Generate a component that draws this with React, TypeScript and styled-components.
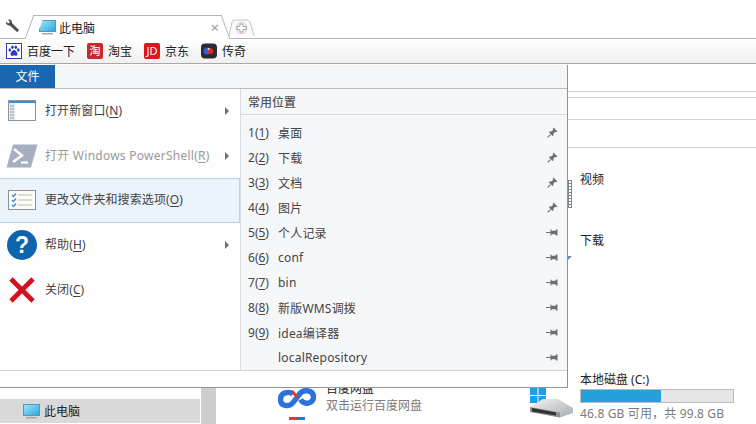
import React from "react";
import styled, { createGlobalStyle } from "styled-components";

const GlobalStyle = createGlobalStyle`
  html, body {
    margin: 0;
    padding: 0;
    background: #fff;
  }
  body {
    font-family: "Noto Sans", "Noto Sans CJK SC", sans-serif;
    font-size: 12px;
    color: #333;
  }
`;

const places = [
  { key: "1", name: "桌面", pinned: true },
  { key: "2", name: "下载", pinned: true },
  { key: "3", name: "文档", pinned: true },
  { key: "4", name: "图片", pinned: true },
  { key: "5", name: "个人记录", pinned: false },
  { key: "6", name: "conf", pinned: false },
  { key: "7", name: "bin", pinned: false },
  { key: "8", name: "新版WMS调拨", pinned: false },
  { key: "9", name: "idea编译器", pinned: false },
  { key: "", name: "localRepository", pinned: false },
];

const MonitorIcon = () => (
  <svg width="17" height="15" viewBox="0 0 17 15">
    <defs>
      <linearGradient id="screen" x1="0" y1="0" x2="1" y2="1">
        <stop offset="0" stopColor="#a4e4f7" />
        <stop offset="1" stopColor="#2aa5e0" />
      </linearGradient>
    </defs>
    <rect x="0.5" y="0.5" width="16" height="11" fill="url(#screen)" stroke="#4a9cc8" />
    <rect x="3" y="13" width="11" height="1.4" fill="#9aa5ad" />
  </svg>
);

const WrenchIcon = () => (
  <svg width="15" height="15" viewBox="0 0 15 15">
    <path
      d="M1 2.5 L3.2 4.6 L5 3 L3 .8 C5 -.2 7.4 1.2 6.9 4 L14 11 L12.3 13.2 L5 6.6 C2.6 7 .4 5 1 2.5 Z"
      fill="#4d4d4d"
    />
  </svg>
);

const NewTabIcon = () => (
  <svg width="27" height="18" viewBox="0 0 27 18">
    <path d="M1 17 L4 3 Q4.5 1 7 1 H19 Q21 1 22 3 L26 17" fill="#fafafa" stroke="#c4c4c4" />
    <circle cx="13.5" cy="9" r="5.5" fill="#f2f2f2" stroke="#cfcfcf" />
    <path
      d="M12 5 H15 V7.5 H18 V10.5 H15 V13 H12 V10.5 H9 V7.5 H12 Z"
      fill="#fff"
      stroke="#a8a8a8"
    />
  </svg>
);

const PawIcon = () => (
  <svg width="16" height="16" viewBox="0 0 16 16">
    <rect x="0.5" y="0.5" width="15" height="15" fill="#fff" stroke="#2f3bc4" />
    <g fill="#2f3bc4">
      <ellipse cx="3.8" cy="7" rx="1.3" ry="1.7" />
      <ellipse cx="6.4" cy="4.2" rx="1.3" ry="1.7" />
      <ellipse cx="9.8" cy="4.2" rx="1.3" ry="1.7" />
      <ellipse cx="12.3" cy="7" rx="1.3" ry="1.7" />
      <path d="M8 7 C10 7 11.5 10 11.5 11.4 C11.5 13 9.5 12.6 8 12.6 C6.5 12.6 4.5 13 4.5 11.4 C4.5 10 6 7 8 7 Z" />
    </g>
  </svg>
);

const LegendIcon = () => (
  <svg width="16" height="16" viewBox="0 0 16 16">
    <rect width="16" height="15" y="0.5" rx="4" fill="#2b2b33" />
    <circle cx="6" cy="8" r="3.6" fill="#2f5fd8" />
    <circle cx="9.4" cy="8" r="3" fill="#d42a2a" />
    <circle cx="7.6" cy="6" r="1" fill="#e8e8f4" />
  </svg>
);

const WindowIcon = () => (
  <svg width="29" height="22" viewBox="0 0 29 22">
    <rect x="0.5" y="0.5" width="27" height="20" fill="#fdfdfd" stroke="#8d949b" />
    <rect x="1" y="1" width="27" height="2" fill="#3f8fd0" />
    <rect x="1" y="3" width="6" height="17" fill="#e6e9ec" />
    <path d="M2 6h4M2 9h4M2 12h4M2 15h4M2 18h4" stroke="#9aa0a6" strokeWidth="1" />
  </svg>
);

const ShellIcon = () => (
  <svg width="32" height="24" viewBox="0 0 32 24">
    <path d="M7 0.5 H31.5 L25 23.5 H0.5 Z" fill="#a6afc2" />
    <path d="M8 5 L16 11.5 L7 18" fill="none" stroke="#fff" strokeWidth="2.4" />
    <path d="M15 18.5 H22" stroke="#fff" strokeWidth="2.2" />
  </svg>
);

const OptionsIcon = () => (
  <svg width="28" height="20" viewBox="0 0 28 20">
    <rect x="0.5" y="0.5" width="27" height="19" fill="#fbfcfd" stroke="#8b8f94" />
    <path d="M10 5h14M10 10h14M10 15h14" stroke="#c8b89e" strokeWidth="1" />
    <path d="M4 5l1.5 1.5L8 3.5M4 10l1.5 1.5L8 8.5M4 15l1.5 1.5L8 13.5" fill="none" stroke="#4f8dc8" strokeWidth="1.5" />
  </svg>
);

const CloseIcon = () => (
  <svg width="26" height="26" viewBox="0 0 26 26">
    <path d="M2 2 L24 24 M24 2 L2 24" stroke="#d3101c" strokeWidth="4.6" />
  </svg>
);

const PinIcon = ({ pinned }: { pinned: boolean }) =>
  pinned ? (
    <svg width="11" height="11" viewBox="0 0 11 11">
      <path d="M6.5 0.5 L10.5 4.5 L9.2 5.2 L8.2 4.8 L6.4 6.8 L6.4 8.6 L5.4 9 L2 5.6 L2.4 4.6 L4.2 4.6 L6.2 2.8 L5.8 1.8 Z" fill="#68707c" />
      <path d="M3.4 7.6 L0.6 10.4" stroke="#68707c" strokeWidth="1.1" />
    </svg>
  ) : (
    <svg width="12" height="9" viewBox="0 0 12 9">
      <path d="M0 4.5 H5" stroke="#68707c" strokeWidth="1" />
      <path d="M4.5 1 V8 L6 6.2 H9.5 L10 7.5 H11.5 V1.5 H10 L9.5 2.8 H6 Z" fill="#68707c" />
    </svg>
  );

const CloudIcon = () => (
  <svg width="38" height="26" viewBox="0 0 38 26">
    <path
      d="M15 10 C11 7 2.5 8 2.5 15.5 C2.5 22 11 24 15.5 18 L22 9.5 C25.5 5 35.5 6 35.5 13 C35.5 20 26 21.5 22.5 15.5"
      fill="none"
      stroke="#2a72dc"
      strokeWidth="5.4"
    />
    <path d="M13.5 7 L19.5 13" fill="none" stroke="#d83a3a" strokeWidth="3" />
  </svg>
);

const DriveIcon = () => (
  <svg width="44" height="31" viewBox="0 0 44 31">
    <defs>
      <linearGradient id="drive" x1="0" y1="0" x2="1" y2="1">
        <stop offset="0" stopColor="#f2f3f4" />
        <stop offset="1" stopColor="#a9adb0" />
      </linearGradient>
    </defs>
    <g fill="#1aa0e6">
      <rect x="0" y="1" width="7.5" height="7" />
      <rect x="8.5" y="0" width="7.5" height="8" />
      <rect x="0" y="9" width="7.5" height="7" />
      <rect x="8.5" y="9" width="7.5" height="8" />
    </g>
    <path d="M13 12 L28 12 L43 21 L43 26 L30 30.5 L0 25 L0 20 Z" fill="url(#drive)" />
    <path d="M0 20 L30 25.5 L30 30.5 L0 25 Z" fill="#8d9194" />
    <path d="M2 21 L26 25.5 V28.6 L2 24.4 Z" fill="#2f3133" />
  </svg>
);

const App: React.FC = () => {
  return (
    <Page>
      <GlobalStyle />
      <TabStrip>
        <ToolButton>
          <WrenchIcon />
        </ToolButton>
        <Tab>
          <MonitorIcon />
          <TabTitle>此电脑</TabTitle>
          <TabClose>×</TabClose>
        </Tab>
        <NewTab>
          <NewTabIcon />
        </NewTab>
      </TabStrip>

      <BookmarkBar>
        <Bookmark>
          <PawIcon />
          百度一下
        </Bookmark>
        <Bookmark>
          <BrandBadge $bg="#c9272c">淘</BrandBadge>
          淘宝
        </Bookmark>
        <Bookmark>
          <BrandBadge $bg="#e1131d">JD</BrandBadge>
          京东
        </Bookmark>
        <Bookmark>
          <LegendIcon />
          传奇
        </Bookmark>
      </BookmarkBar>

      <Explorer>
        <RibbonRow $height={26} />
        <RibbonRow $height={5} />
        <RibbonRow $height={21} />
        <RibbonRow $height={27} />
        <ExplorerBody>
          <Sidebar>
            <SidebarRow>
              <MonitorIcon />
              此电脑
            </SidebarRow>
          </Sidebar>
          <ScrollTrack />
          <Content>
            <LeftTiles>
              <AppTile>
                <AppIconColumn>
                  <CloudIcon />
                  <AppBar />
                </AppIconColumn>
                <AppText>
                  <TileTitle>百度网盘</TileTitle>
                  <TileHint>双击运行百度网盘</TileHint>
                </AppText>
              </AppTile>
            </LeftTiles>
            <RightTiles>
              <FolderTile>
                <FilmSlot>
                  <FilmGrip />
                </FilmSlot>
                <TileTitle>视频</TileTitle>
              </FolderTile>
              <FolderTile>
                <FolderSlot>
                  <FolderCorner />
                </FolderSlot>
                <TileTitle>下载</TileTitle>
              </FolderTile>
              <DriveTile>
                <DriveIcon />
                <DriveInfo>
                  <TileTitle>本地磁盘 (C:)</TileTitle>
                  <UsageBar>
                    <UsageFill style={{ width: `${(46.8 / 99.8) * 112}%` }} />
                  </UsageBar>
                  <DriveHint>46.8 GB 可用，共 99.8 GB</DriveHint>
                </DriveInfo>
              </DriveTile>
            </RightTiles>
          </Content>
        </ExplorerBody>
      </Explorer>

      <FileMenu>
        <MenuHeader>
          <FileTab>文件</FileTab>
        </MenuHeader>
        <MenuColumns>
          <Commands>
            <Command>
              <CommandIcon>
                <WindowIcon />
              </CommandIcon>
              <CommandLabel>
                打开新窗口(<u>N</u>)
              </CommandLabel>
              <Arrow />
            </Command>
            <Command $disabled>
              <CommandIcon>
                <ShellIcon />
              </CommandIcon>
              <CommandLabel>
                打开 Windows PowerShell(<u>R</u>)
              </CommandLabel>
              <Arrow />
            </Command>
            <Command $active>
              <CommandIcon>
                <OptionsIcon />
              </CommandIcon>
              <CommandLabel>
                更改文件夹和搜索选项(<u>O</u>)
              </CommandLabel>
            </Command>
            <Command>
              <CommandIcon>
                <HelpCircle>?</HelpCircle>
              </CommandIcon>
              <CommandLabel>
                帮助(<u>H</u>)
              </CommandLabel>
              <Arrow />
            </Command>
            <Command>
              <CommandIcon>
                <CloseIcon />
              </CommandIcon>
              <CommandLabel>
                关闭(<u>C</u>)
              </CommandLabel>
            </Command>
          </Commands>
          <Recent>
            <RecentTitle>常用位置</RecentTitle>
            <RecentList>
              {places.map((place) => (
                <RecentRow key={place.name}>
                  <RecentKey>
                    {place.key && (
                      <>
                        {place.key}(<u>{place.key}</u>)
                      </>
                    )}
                  </RecentKey>
                  <RecentName>{place.name}</RecentName>
                  <PinIcon pinned={place.pinned} />
                </RecentRow>
              ))}
            </RecentList>
          </Recent>
        </MenuColumns>
        <MenuFooter />
      </FileMenu>
    </Page>
  );
};

const Page = styled.div`
  position: relative;
  width: 756px;
  height: 424px;
  overflow: hidden;
  background: #fff;
`;

const TabStrip = styled.div`
  display: flex;
  align-items: flex-end;
  height: 38px;
  border-bottom: 1px solid #b4b4b4;
  box-sizing: content-box;
`;

const ToolButton = styled.div`
  display: flex;
  width: 34px;
  height: 24px;
  padding: 5px 0 0 5px;
  box-sizing: border-box;
`;

const Tab = styled.div`
  position: relative;
  display: flex;
  align-items: center;
  width: 187px;
  height: 24px;
  margin-bottom: -1px;
  padding-left: 5px;
  box-sizing: border-box;
  background: #fff;
  border-top: 1px solid #b4b4b4;
  border-radius: 3px 3px 0 0;

  &::before,
  &::after {
    content: "";
    position: absolute;
    top: -1px;
    bottom: 0;
    width: 10px;
    background: #fff;
    border-top: 1px solid #b4b4b4;
  }
  &::before {
    left: -5px;
    border-left: 1px solid #b4b4b4;
    transform: skewX(-20deg);
  }
  &::after {
    right: -5px;
    border-right: 1px solid #b4b4b4;
    transform: skewX(20deg);
  }
`;

const TabTitle = styled.span`
  position: relative;
  z-index: 1;
  margin-left: 3px;
  flex: 1;
  color: #222;
`;

const TabClose = styled.span`
  position: relative;
  z-index: 1;
  margin-right: 2px;
  font-size: 15px;
  line-height: 15px;
  color: #999;
`;

const NewTab = styled.div`
  display: flex;
  height: 18px;
  margin: 0 0 1px 7px;
`;

const BookmarkBar = styled.div`
  display: flex;
  align-items: center;
  gap: 12px;
  height: 25px;
  padding: 0 6px 1px;
  background: linear-gradient(#ffffff, #f0f0f0);
  border-bottom: 1px solid #a8a8a8;
  box-sizing: border-box;
  margin-bottom: 1px;
`;

const Bookmark = styled.div`
  display: flex;
  align-items: center;
  gap: 5px;
  color: #222;
  white-space: nowrap;
`;

const BrandBadge = styled.span<{ $bg: string }>`
  display: flex;
  align-items: center;
  justify-content: center;
  width: 16px;
  height: 16px;
  border-radius: 2px;
  background: ${(p) => p.$bg};
  color: #fff;
  font-size: 11px;
  line-height: 16px;
`;

const Explorer = styled.div`
  display: flex;
  flex-direction: column;
  height: 359px;
`;

const RibbonRow = styled.div<{ $height: number }>`
  height: ${(p) => p.$height}px;
  flex: none;
  border-bottom: 1px solid #d3d3d3;
`;

const ExplorerBody = styled.div`
  flex: 1;
  display: grid;
  grid-template-columns: 201px 15px 1fr;
  min-height: 0;
`;

const Sidebar = styled.div`
  display: flex;
  flex-direction: column;
  justify-content: flex-end;
  padding-bottom: 1px;
  padding-right: 1px;
`;

const SidebarRow = styled.div`
  display: flex;
  align-items: center;
  gap: 4px;
  height: 24px;
  padding-left: 23px;
  background: #d9d9d9;
  color: #222;
`;

const ScrollTrack = styled.div`
  background: #cdcdcd;
`;

const Content = styled.div`
  display: grid;
  grid-template-columns: 314px 1fr;
`;

const LeftTiles = styled.div`
  display: flex;
  flex-direction: column;
  justify-content: flex-end;
  padding-left: 62px;
`;

const AppTile = styled.div`
  display: flex;
  gap: 10px;
`;

const AppIconColumn = styled.div`
  display: flex;
  flex-direction: column;
  align-items: center;
  width: 38px;
  gap: 7px;
  height: 40px;
`;

const AppBar = styled.div`
  flex: none;
  width: 16px;
  height: 3px;
  background: linear-gradient(90deg, #d83a3a 50%, #2a72dc 50%);
`;

const AppText = styled.div`
  margin-top: -3px;
`;

const TileTitle = styled.div`
  color: #222;
  line-height: 16px;
  white-space: nowrap;
`;

const TileHint = styled.div`
  color: #7b7b7b;
  line-height: 17px;
  white-space: nowrap;
`;

const RightTiles = styled.div`
  display: flex;
  flex-direction: column;
  padding-top: 17px;
`;

const FolderTile = styled.div`
  display: flex;
  align-items: center;
  gap: 8px;
  height: 30px;
  margin-bottom: 31px;
`;

const FilmSlot = styled.div`
  display: flex;
  justify-content: flex-end;
  flex: none;
  align-self: flex-start;
  width: 42px;
  height: 28px;
  margin-top: 15px;
`;

const FilmGrip = styled.div`
  width: 4px;
  height: 28px;
  margin-right: 0;
  box-sizing: border-box;
  border: 1px solid #80868d;
  background: repeating-linear-gradient(#ffffff 0 2px, #80868d 2px 3px);
`;

const FolderSlot = styled.div`
  display: flex;
  justify-content: flex-end;
  align-self: flex-end;
  width: 42px;
  height: 5px;
  margin-bottom: -5px;
`;

const FolderCorner = styled.div`
  width: 5px;
  height: 5px;
  background: #5c8fc4;
  clip-path: polygon(0 0, 100% 0, 0 100%);
`;

const DriveTile = styled.div`
  display: flex;
  align-items: flex-end;
  gap: 6px;
  margin-top: auto;
  padding-bottom: 6px;
`;

const DriveInfo = styled.div`
  display: flex;
  flex-direction: column;
  width: 154px;
  margin-bottom: -4px;
`;

const UsageBar = styled.div`
  height: 14px;
  margin: 1px 0 2px;
  background: #e6e6e6;
  border: 1px solid #bcbcbc;
  box-sizing: border-box;
  overflow: hidden;
`;

const UsageFill = styled.div`
  height: 100%;
  max-width: 52.5%;
  background: #26a0da;
`;

const DriveHint = styled(TileHint)`
  letter-spacing: 0.15px;
`;

const FileMenu = styled.div`
  position: absolute;
  top: 65px;
  left: 0;
  width: 568px;
  height: 323px;
  display: flex;
  flex-direction: column;
  box-sizing: border-box;
  background: #fff;
  border-right: 1px solid #8d9399;
  border-bottom: 1px solid #8d9399;
`;

const MenuHeader = styled.div`
  flex: none;
  height: 24px;
  background: #f5f6f7;
  border-bottom: 1px solid #b9bec4;
  box-sizing: border-box;
`;

const FileTab = styled.div`
  width: 55px;
  height: 23px;
  background: #1a67b0;
  color: #fff;
  line-height: 23px;
  text-align: center;
`;

const MenuColumns = styled.div`
  flex: 1;
  display: grid;
  grid-template-columns: 240px 1fr;
  min-height: 0;
`;

const Commands = styled.div`
  display: flex;
  flex-direction: column;
  background: #fdfdfe;
`;

const Command = styled.div<{ $active?: boolean; $disabled?: boolean }>`
  display: flex;
  align-items: center;
  height: 44.6px;
  box-sizing: border-box;
  padding-right: 9px;
  color: ${(p) => (p.$disabled ? "#9a9a9a" : "#444")};
  background: ${(p) => (p.$active ? "#ebf3fb" : "transparent")};
  border: 1px solid ${(p) => (p.$active ? "#b8d2ec" : "transparent")};
  border-left-width: 0;
  letter-spacing: ${(p) => (p.$disabled ? "0.25px" : "0.1px")};
  u {
    text-underline-offset: 2px;
  }
`;

const CommandIcon = styled.div`
  display: flex;
  align-items: center;
  justify-content: center;
  flex: none;
  width: 45px;
  padding-right: 1px;
  box-sizing: border-box;
`;

const CommandLabel = styled.span`
  flex: 1;
  padding-bottom: 2px;
  white-space: nowrap;
`;

const Arrow = styled.span`
  width: 0;
  height: 0;
  margin-right: 1px;
  border-left: 4px solid #6d6d6d;
  border-top: 4px solid transparent;
  border-bottom: 4px solid transparent;
`;

const HelpCircle = styled.div`
  width: 30px;
  height: 30px;
  border-radius: 50%;
  background: #0f64ae;
  color: #fff;
  font-family: "Liberation Sans", sans-serif;
  font-size: 23px;
  font-weight: 700;
  line-height: 30px;
  text-align: center;
`;

const Recent = styled.div`
  display: flex;
  flex-direction: column;
  padding-left: 7px;
  background: #f6f7f9;
  border-left: 1px solid #d8dce0;
`;

const RecentTitle = styled.div`
  flex: none;
  height: 26px;
  line-height: 27px;
  font-weight: 500;
  color: #555;
  margin-left: -7px;
  padding-left: 7px;
  border-bottom: 1px solid #d5d8dc;
  box-sizing: border-box;
`;

const RecentList = styled.div`
  display: flex;
  flex-direction: column;
  padding-top: 5px;
`;

const RecentRow = styled.div`
  display: flex;
  align-items: center;
  height: 25px;
  padding-right: 9px;
  color: #444;
  u {
    text-underline-offset: 2px;
  }
`;

const RecentKey = styled.span`
  flex: none;
  width: 30px;
  white-space: nowrap;
`;

const RecentName = styled.span`
  flex: 1;
  white-space: nowrap;
  letter-spacing: 0.2px;
`;

const MenuFooter = styled.div`
  flex: none;
  height: 16px;
  background: #fff;
  border-top: 1px solid #cfd2d6;
`;

export default App;
